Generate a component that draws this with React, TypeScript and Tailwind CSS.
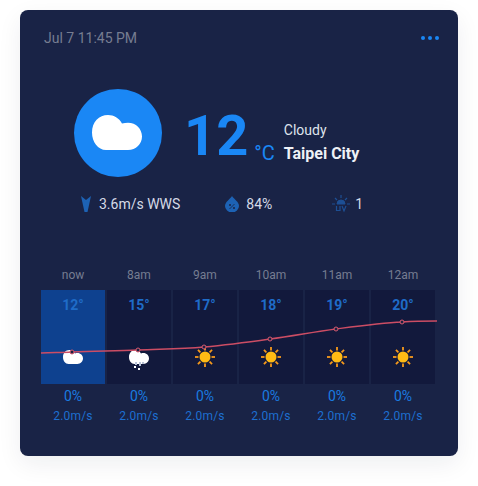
const hours = [
  { label: "now", temp: 12, icon: "cloud" },
  { label: "8am", temp: 15, icon: "snow" },
  { label: "9am", temp: 17, icon: "sun" },
  { label: "10am", temp: 18, icon: "sun" },
  { label: "11am", temp: 19, icon: "sun" },
  { label: "12am", temp: 20, icon: "sun" },
];

const points = [
  [31, 61],
  [97, 59],
  [163, 56],
  [229, 48],
  [295, 38],
  [361, 31],
];

function Cloud({ className }: { className?: string }) {
  return (
    <svg viewBox="0 0 50 35" className={className} fill="#fff">
      <path d="M16 0C22 0 27 3 30 8.500C32 8 34 7.800 36 7.800C44 7.800 50 14 50 21.500C50 29 44 35 36 35L14 35C6 35 0 27 0 17.500C0 7 7 0 16 0Z" />
    </svg>
  );
}

function Sun() {
  const rays = [0, 45, 90, 135, 180, 225, 270, 315];
  return (
    <svg viewBox="0 0 20 20" className="h-5 w-5">
      {rays.map((r) => (
        <rect key={r} x="9.100" y="0" width="1.800" height="3.500" fill="#f79a1b" transform={`rotate(${r} 10 10)`} />
      ))}
      <circle cx="10" cy="10" r="5.500" fill="#ffbb14" />
    </svg>
  );
}

function HourIcon({ icon }: { icon: string }) {
  if (icon === "sun") return <Sun />;
  return (
    <div className="relative flex h-5 w-5 items-center justify-center">
      <Cloud className="h-[14px] w-5" />
      {icon === "snow" && (
        <svg viewBox="0 0 14 8" className="absolute top-[15px] left-[3px] h-2 w-[14px]">
          <rect x="3" y="0" width="2" height="3" fill="#b9c2d6" />
          <rect x="7" y="0" width="2" height="4" fill="#b9c2d6" />
          <rect x="10" y="0" width="2" height="2" fill="#b9c2d6" />
          <rect x="2" y="4" width="2" height="2" fill="#fff" />
          <rect x="6" y="6" width="2" height="2" fill="#fff" />
        </svg>
      )}
    </div>
  );
}

export default function App() {
  return (
    <div className="h-[486px] w-[478px] bg-white pt-[10px] pl-[20px] font-['Roboto',sans-serif]">
      <div className="h-[446px] w-[438px] rounded-lg bg-[#192346] shadow-[0_8px_24px_rgba(20,30,60,0.07)]">
        <div className="flex items-center justify-between pt-[20px] pr-[19px] pl-[24px]">
          <span className="text-sm leading-4 text-[#767d91]">Jul 7 11:45 PM</span>
          <div className="flex gap-[3px]">
            <span className="h-1 w-1 rounded-full bg-[#1a87f5]" />
            <span className="h-1 w-1 rounded-full bg-[#1a87f5]" />
            <span className="h-1 w-1 rounded-full bg-[#1a87f5]" />
          </div>
        </div>

        <div className="mt-[43px] flex h-[88px] items-center pl-[54px]">
          <div className="flex h-[88px] w-[88px] items-center justify-center rounded-full bg-[#1a87f5] pr-[2px] pb-[2px]">
            <Cloud className="h-[35px] w-[50px]" />
          </div>
          <span className="mt-[6px] ml-[22px] text-[56px] leading-none font-bold text-[#1a87f5]">12</span>
          <span className="mt-[40px] ml-[6px] text-xl leading-6 text-[#1a87f5]">°C</span>
          <div className="mt-[17px] ml-[9px] flex flex-col">
            <span className="text-sm leading-[23px] text-[#dfe3ec]">Cloudy</span>
            <span className="text-base leading-[23px] font-bold text-[#eef1f6]">Taipei City</span>
          </div>
        </div>

        <div className="mt-[17px] flex h-[20px] items-center text-sm text-[#d5dae6]">
          <svg viewBox="0 0 10 16" className="ml-[61px] h-4 w-[10px]">
            <path d="M0 0L5 4L10 0L6.500 16H3.500Z" fill="#1d62b4" />
          </svg>
          <span className="ml-[8px]">3.6m/s WWS</span>
          <svg viewBox="0 0 14 16" className="ml-[45px] h-4 w-[14px]">
            <path d="M7 0C9 3 14 6 14 10A7 6.500 0 0 1 0 10C0 6 5 3 7 0Z" fill="#1d62b4" />
            <circle cx="5" cy="9" r="1" fill="#192346" />
            <circle cx="9" cy="12" r="1" fill="#192346" />
            <path d="M9.500 8L4.500 13" stroke="#192346" strokeWidth="0.800" />
          </svg>
          <span className="ml-[7px]">84%</span>
          <svg viewBox="0 0 18 18" className="ml-[60px] h-[18px] w-[18px]" fill="none" stroke="#1d4f94">
            <path d="M9 0V3M3 3L5 5M15 3L13 5M0 9H3M15 9H18" strokeWidth="1.200" />
            <path d="M5 9A4 4 0 0 1 13 9Z" fill="#1d4f94" />
            <path d="M4.500 11V15.500H8V11M10 11L12 16L14 11" strokeWidth="1.200" />
          </svg>
          <span className="ml-[5px]">1</span>
        </div>

        <div className="relative mt-[53px] grid w-[394px] grid-cols-6 gap-x-[2px] pl-[21px] box-content">
          {hours.map((h, i) => (
            <div key={h.label} className="flex flex-col items-center">
              <span className="text-xs leading-4 text-[#767d91]">{h.label}</span>
              <div className={`mt-[7px] flex h-[94px] w-full flex-col items-center ${i === 0 ? "bg-[#0e418f]" : "bg-[#12193c]"}`}>
                <span className="mt-[7px] text-sm leading-4 font-bold text-[#1f6cc8]">{h.temp}°</span>
                <div className="mt-[34px]">
                  <HourIcon icon={h.icon} />
                </div>
              </div>
              <span className="mt-[2px] text-sm leading-5 text-[#1a7be0]">0%</span>
              <span className="text-xs leading-5 tracking-[0.2px] text-[#1d6fd0]">2.0m/s</span>
            </div>
          ))}
          <svg viewBox="0 0 416 94" className="absolute top-[24px] left-[21px] h-[94px] w-[416px] overflow-visible" fill="none">
            <path
              d="M0 62C12 61.500 20 61.500 31 61C55 60 75 60 97 59C120 58 140 58 163 56C186 54 208 51 229 48C252 45 272 41 295 38C318 35 340 32 361 31C375 30 385 30 396 30"
              stroke="#cc4d64"
              strokeWidth="1.400"
            />
            {points.map(([x, y]) => (
              <circle key={x} cx={x} cy={y} r="2" fill="#1a2040" stroke="#d85a70" strokeWidth="1" />
            ))}
          </svg>
        </div>
      </div>
    </div>
  );
}
